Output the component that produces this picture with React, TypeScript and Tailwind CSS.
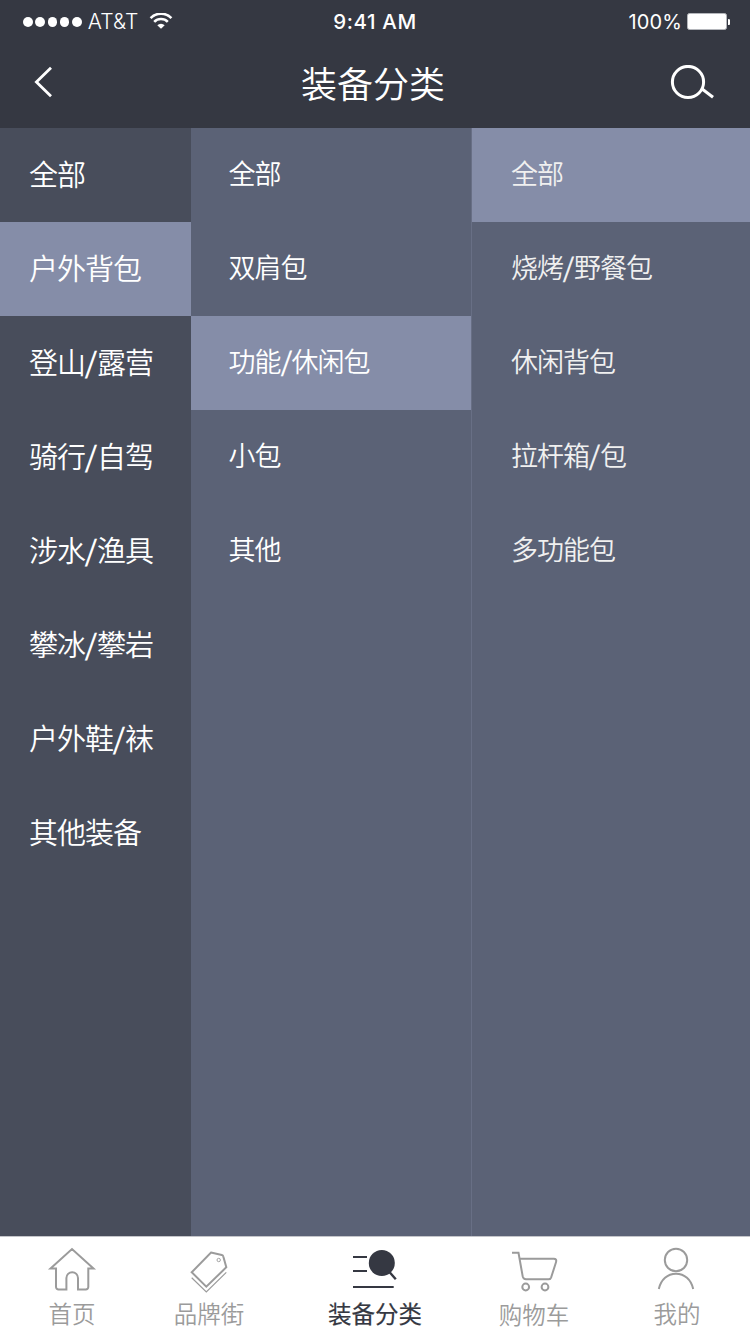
import React, { useState } from "react";

const activityItems = ["全部", "户外背包", "登山/露营", "骑行/自驾", "涉水/渔具", "攀冰/攀岩", "户外鞋/袜", "其他装备"];
const typeItems = ["全部", "双肩包", "功能/休闲包", "小包", "其他"];
const detailItems = ["全部", "烧烤/野餐包", "休闲背包", "拉杆箱/包", "多功能包"];

function StatusBar() {
  return (
    <div className="flex h-10 items-center pt-1 font-['Inter','Liberation_Sans',sans-serif] text-[20px] leading-6">
      <div className="flex w-[250px] items-center pl-[23px]">
        <div className="flex gap-[2.7px]">
          {[0, 1, 2, 3, 4].map((i) => (
            <span key={i} className="size-[9.6px] rounded-full bg-white" />
          ))}
        </div>
        <span className="ml-[6px] w-[57px] text-[21px] font-[350] tracking-[0.1px]">AT&amp;T</span>
        <svg className="ml-[4px]" width="24" height="18" viewBox="0 0 24 18" fill="none" stroke="white" strokeWidth="2.6">
          <path d="M1.6 5.1a14.6 14.6 0 0 1 20.8 0M5.2 8.9a9.5 9.5 0 0 1 13.6 0" />
          <path d="M12 15.8 8.3 12.2a5.2 5.2 0 0 1 7.4 0Z" fill="white" stroke="none" />
        </svg>
      </div>
      <div className="w-[250px] text-center text-[20.5px] font-medium tracking-[0.6px]">9:41 AM</div>
      <div className="flex w-[250px] items-center justify-end pr-5">
        <span className="mr-[5px] tracking-[0.1px]">100%</span>
        <svg width="43" height="18" viewBox="0 0 43 18" fill="white">
          <rect x="0.5" y="0.5" width="39" height="16" rx="2" stroke="#b4b6bb" />
          <path d="M41 6a3 3 0 0 1 0 6Z" />
        </svg>
      </div>
    </div>
  );
}

function NavBar() {
  return (
    <div className="flex h-[88px] items-center justify-between pr-[36px] pb-[2px] pl-[32px]">
      <button aria-label="返回">
        <svg width="48" height="34" viewBox="0 0 48 34" fill="none" stroke="white" strokeWidth="2.8">
          <path d="M19 1.7 4.4 16 19 30.3" />
        </svg>
      </button>
      <h1 className="mb-[2px] text-[36px] leading-[48px] font-[350]">装备分类</h1>
      <button aria-label="搜索">
        <svg width="48" height="36" viewBox="0 0 48 36" fill="none" stroke="white" strokeWidth="3">
          <circle cx="22" cy="17" r="15.6" />
          <path d="m35.5 23.5 11.5 8.8" />
        </svg>
      </button>
    </div>
  );
}

function ItemLabel({ text }: { text: string }) {
  const [head, tail] = text.split("/");
  return (
    <span className="pb-[4px] leading-[42px] font-[350]">
      {head}
      {tail && (
        <span className="inline-block w-[0.41em] origin-center scale-y-110 -skew-x-[7deg] text-center font-['Inter',sans-serif] leading-none font-normal tracking-normal">
          /
        </span>
      )}
      {tail}
    </span>
  );
}

interface ColumnProps {
  items: string[];
  selected: number;
  onSelect: (index: number) => void;
  className: string;
}

function Column({ items, selected, onSelect, className }: ColumnProps) {
  return (
    <div className={`flex flex-col ${className}`}>
      {items.map((item, i) => (
        <button
          key={item}
          onClick={() => onSelect(i)}
          className={`flex h-[94px] shrink-0 items-center pl-(--inset) text-left whitespace-nowrap ${i === selected ? "bg-[#858da8]" : ""}`}
        >
          <ItemLabel text={item} />
        </button>
      ))}
    </div>
  );
}

const tabs = [
  {
    label: "首页",
    className: "w-[144px] text-[#9b9b9b] font-[350]",
    labelClass: "pt-px",
    icon: (
      <path d="M14 28.5H8.5L30 9l21.5 19.5H46.3V47a2.5 2.5 0 0 1-2.5 2.5H36V38a5.8 5.8 0 0 0-11.6 0V49.5H16.5A2.5 2.5 0 0 1 14 47Z" />
    ),
  },
  {
    label: "品牌街",
    className: "w-[130px] text-[#9b9b9b] font-[350]",
    labelClass: "pt-px",
    icon: (
      <>
        <path d="m32 12.5 10.8 2.4q1.2.3 1.5 1.5l3 10.9-20 19.3-14.6-14.3Z" />
        <path d="m12.7 37.7 14.6 14.2 20-19.5" strokeWidth="1.2" />
        <circle cx="39.7" cy="20" r="1.7" strokeWidth="0.9" />
      </>
    ),
  },
  {
    label: "装备分类",
    className: "w-[202px] text-[#353842] [-webkit-text-stroke:0.2px]",
    labelClass: "pt-px",
    icon: (
      <>
        <path d="M8 17h14M8 31h14M8 47h40.7" />
        <path d="m44 31.5 6.8 7.8" strokeWidth="2.4" />
        <circle cx="36.8" cy="23" r="13" fill="currentColor" stroke="none" />
      </>
    ),
  },
  {
    label: "购物车",
    className: "w-[116px] text-[#9b9b9b] font-[350]",
    labelClass: "pt-[2px]",
    icon: (
      <>
        <path d="M8 12.8h6.5l4.2 23.6q.6 2.9 3.3 2.9h22.5q2 0 2.7-2L52 22.2q1-3.4-2.2-3.4H15.7" />
        <circle cx="21.7" cy="47" r="3.4" />
        <circle cx="41" cy="47" r="3.4" />
      </>
    ),
  },
  {
    label: "我的",
    className: "w-[158px] pl-[12px] text-[#9b9b9b] font-[350]",
    labelClass: "pt-px",
    icon: (
      <>
        <circle cx="29" cy="20" r="11.2" />
        <path d="M11.8 49C14 39.5 20.5 33.8 29 33.8S44 39.5 46.2 49" />
      </>
    ),
  },
];

function TabBar() {
  return (
    <nav className="flex h-[98px] border-t border-[#c4c5ca] bg-white">
      {tabs.map((tab) => (
        <button key={tab.label} className={`flex shrink-0 flex-col items-center pt-[3px] ${tab.className}`}>
          <svg width="60" height="56" viewBox="0 0 60 56" fill="none" stroke="currentColor" strokeWidth="2">
            {tab.icon}
          </svg>
          <span className={`text-[23.5px] leading-8 whitespace-nowrap ${tab.labelClass}`}>{tab.label}</span>
        </button>
      ))}
    </nav>
  );
}

export default function App() {
  const [activity, setActivity] = useState(1);
  const [type, setType] = useState(2);
  const [detail, setDetail] = useState(0);

  return (
    <div className="flex h-[1334px] w-[750px] flex-col overflow-hidden font-['Noto_Sans_CJK_SC',sans-serif] text-white">
      <header className="h-32 bg-[#353842]">
        <StatusBar />
        <NavBar />
      </header>
      <main className="flex flex-1">
        <Column
          items={activityItems}
          selected={activity}
          onSelect={setActivity}
          className="w-[191px] bg-[#484d5b] text-[29px] tracking-[-1px] [--inset:29px]"
        />
        <Column
          items={typeItems}
          selected={type}
          onSelect={setType}
          className="w-[280px] bg-[#5b6276] text-[27px] tracking-[-1px] [--inset:37.5px]"
        />
        <Column
          items={detailItems}
          selected={detail}
          onSelect={setDetail}
          className="w-[279px] border-l border-[#686f85] bg-[#5b6276] text-[27px] tracking-[-1px] text-[#f0f0f0] [--inset:39px]"
        />
      </main>
      <TabBar />
    </div>
  );
}
